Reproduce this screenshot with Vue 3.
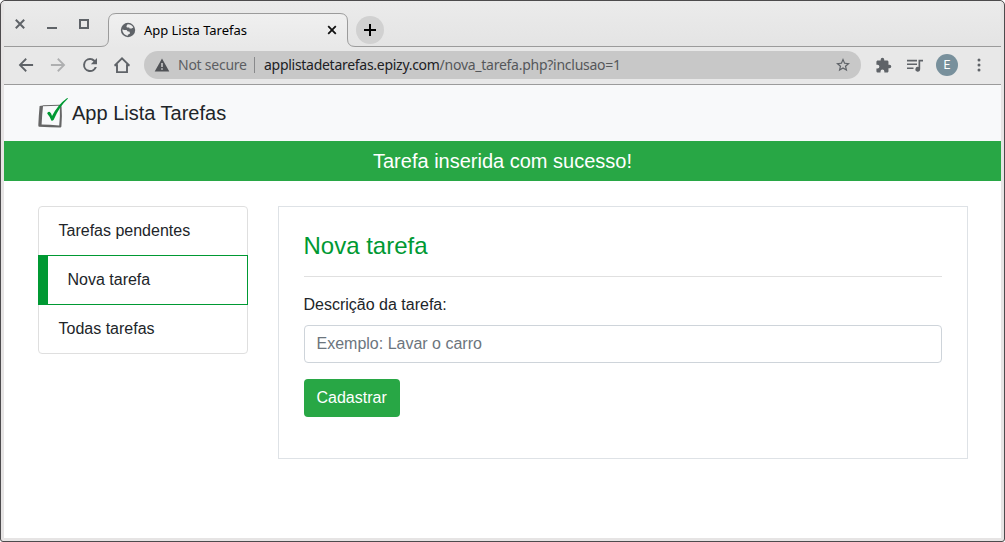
<script setup>
import { ref } from 'vue'

const items = ['Tarefas pendentes', 'Nova tarefa', 'Todas tarefas']
const active = ref(1)
const descricao = ref('')
</script>

<template>
  <div class="window">
    <header class="tabstrip">
      <svg class="outline" width="997" height="46" viewBox="4 1 997 46">
        <defs>
          <linearGradient id="tabfill" x1="0" y1="0" x2="0" y2="1">
            <stop offset="0" stop-color="#f0f0f0" />
            <stop offset="1" stop-color="#e8e8e8" />
          </linearGradient>
        </defs>
        <path d="M4 46.500H101Q108.500 46.500 108.500 39V21Q108.500 13.500 116 13.500H340Q347.500 13.500 347.500 21V39Q347.500 46.500 355 46.500H1001V48H4z" fill="url(#tabfill)" />
        <path d="M4 46.500H101Q108.500 46.500 108.500 39V21Q108.500 13.500 116 13.500H340Q347.500 13.500 347.500 21V39Q347.500 46.500 355 46.500H1001" fill="none" stroke="#9b9b9b" />
      </svg>
      <div class="controls">
        <svg width="12" height="12" viewBox="0 0 12 12"><path d="M1.800 1.800L10.200 10.200M10.200 1.800L1.800 10.200" stroke="#5f6368" stroke-width="2" /></svg>
        <svg width="12" height="12" viewBox="0 0 12 12"><path d="M1 9h10v2H1z" fill="#5f6368" /></svg>
        <svg width="12" height="12" viewBox="0 0 12 12"><path d="M2 2h8v8H2z" fill="none" stroke="#5f6368" stroke-width="2" /></svg>
      </div>
      <div class="tab">
        <svg width="16" height="16" viewBox="0 0 16 16">
          <circle cx="8" cy="8" r="7.200" fill="#5f6368" />
          <path d="M7.800 2.300C6.500 3.500 6 4.500 7 5.400L9.200 5.500 9.600 6.400 11.600 6.500 13.300 5.500C12.500 3.700 10.500 2.200 7.800 2.300z M2.300 7.600C2.500 10.700 4.800 13.500 7.900 13.700L7.800 12.800 9.900 11.700 9.700 9.700 7.500 9.200 6.600 8 4.500 7.900z" fill="#ececec" />
        </svg>
        <span class="tab-title">App Lista Tarefas</span>
        <svg class="tab-close" width="10" height="10" viewBox="0 0 10 10"><path d="M1.200 1.200L8.800 8.800M8.800 1.200L1.200 8.800" stroke="#111" stroke-width="1.800" /></svg>
      </div>
      <button class="new-tab">
        <svg width="12" height="12" viewBox="0 0 12 12"><path d="M6 0v12M0 6h12" stroke="#000" stroke-width="2" /></svg>
      </button>
    </header>

    <div class="toolbar">
      <div class="nav-icons">
        <svg width="20" height="20" viewBox="0 0 24 24"><path fill="#5f6368" d="M20.500 10.700H7.500l5.500-5.400L11.500 3.700 3.200 12l8.300 8.300 1.500-1.600L7.500 13.300h13z" /></svg>
        <svg width="20" height="20" viewBox="0 0 24 24"><path fill="#aeafb0" d="M3.500 10.700h13L11 5.300l1.500-1.600 8.300 8.300-8.300 8.300-1.500-1.600 5.500-5.400h-13z" /></svg>
        <svg width="20" height="20" viewBox="0 0 24 24"><path fill="#5f6368" d="M18 6A8.400 8.400 0 0 0 12 3.600a8.400 8.400 0 1 0 8.200 10.700h-2.600A6 6 0 1 1 12 6c1.700 0 3.200.7 4.200 1.800L13 11h7.400V3.600z" /></svg>
        <svg width="20" height="20" viewBox="0 0 20 20"><path fill="none" stroke="#5f6368" stroke-width="1.900" d="M2.600 10.700L10 3.300l7.400 7.400M2.500 10.200H5V17.100H15V10.200h2.500" /></svg>
      </div>
      <div class="address">
        <svg width="16" height="14" viewBox="0 0 16 14"><path fill="#505256" fill-rule="evenodd" d="M8 .5L15.300 13.500H.7zM7.200 5v4h1.600V5zM7.200 10.200v1.600h1.600v-1.600z" /></svg>
        <span class="secure">Not secure</span>
        <span class="divider"></span>
        <span class="url"><span class="host">applistadetarefas.epizy.com</span><span class="path">/nova_tarefa.php?inclusao=1</span></span>
        <svg class="star" width="16" height="16" viewBox="0 0 24 24"><path fill="#5f6368" d="M22.500 9.200l-7.500-.7L12 1.500 9 8.500l-7.500.7 5.700 4.900L5.500 21.500 12 17.600l6.500 3.900-1.700-7.400zM12 15.400l-3.800 2.300 1-4.300-3.300-2.900 4.400-.4L12 6.100l1.700 4 4.400.4-3.300 2.900 1 4.300z" /></svg>
      </div>
      <svg class="puzzle" width="17" height="17" viewBox="0 0 24 24"><path fill="#5f6368" d="M20.500 11H19V7c0-1.100-.9-2-2-2h-4V3.500a2.500 2.500 0 0 0-5 0V5H4c-1.100 0-2 .9-2 2v3.800h1.500a2.700 2.700 0 0 1 0 5.400H2V20c0 1.100.9 2 2 2h3.800v-1.500a2.700 2.700 0 0 1 5.400 0V22H17c1.100 0 2-.9 2-2v-4h1.500a2.500 2.500 0 0 0 0-5z" /></svg>
      <svg class="queue" width="16" height="13" viewBox="0 0 16 13"><path fill="#5f6368" d="M0 .8h10v1.600H0zM0 4.500h10v1.600H0zM0 8.500h6.500v1.600H0zM11.500.8H16v1.700h-2.800v7.800a2.400 2.400 0 1 1-1.700-2.300z" /></svg>
      <span class="avatar">E</span>
      <svg class="dots" width="4" height="14" viewBox="0 0 4 14"><g fill="#5f6368"><circle cx="2" cy="2" r="1.500" /><circle cx="2" cy="7" r="1.500" /><circle cx="2" cy="12" r="1.500" /></g></svg>
    </div>

    <div class="page">
      <nav class="navbar">
        <svg width="30" height="30" viewBox="0 0 30 30">
          <path fill="#666" fill-rule="evenodd" d="M1.600 8L5 7.600V7.200L21.500 6.800Q23.500 6.800 23.600 9L23.900 18 23.400 28.500Q23.300 29.600 22 29.500L12 29.200 1 28.700Q.2 28.600.3 27L.8 18zM5 8.200L4.200 17 3.600 26.400 12 26.800 21.200 27.400 21.900 18 21.800 8.900Q21.700 7.700 20.500 7.700z" />
          <path fill="#009933" d="M9.200 15.500Q9.600 13.400 11.800 13.900Q13.300 14.900 14 18Q20 6.500 29.200 0Q29.900 0 30 .6Q21.500 8.500 15.700 21.700Q14.600 23.200 13.300 22.600Q12.100 18.800 9.200 15.500z" />
        </svg>
        <span>App Lista Tarefas</span>
      </nav>
      <div class="alert">Tarefa inserida com sucesso!</div>
      <main class="content">
        <ul class="menu">
          <li v-for="(item, i) in items" :key="item" :class="{ active: i === active }" @click="active = i">{{ item }}</li>
        </ul>
        <section class="panel">
          <h4>Nova tarefa</h4>
          <hr />
          <form @submit.prevent>
            <label for="descricao">Descrição da tarefa:</label>
            <input id="descricao" v-model="descricao" type="text" placeholder="Exemplo: Lavar o carro" />
            <button class="submit">Cadastrar</button>
          </form>
        </section>
      </main>
    </div>
  </div>
</template>

<style>
body { background: #fff; }
</style>

<style scoped>
* { box-sizing: border-box; }
svg { display: block; flex: none; }
.window {
  width: 1005px;
  height: 542px;
  border: 1px solid #4d4b4d;
  border-radius: 5px 5px 3px 3px;
  padding: 0 3px 3px;
  background: #e6e4e4;
  overflow: hidden;
  display: flex;
  flex-direction: column;
  font-family: "Liberation Sans", Arial, sans-serif;
  color: #212529;
}
.tabstrip {
  position: relative;
  height: 46px;
  flex: none;
  display: flex;
  background: linear-gradient(#ebebeb, #e4e4e4);
}
.outline { position: absolute; left: 0; top: 0; }
.controls, .tab, .new-tab { position: relative; }
.controls { display: flex; gap: 20px; padding: 17px 0 0 10px; width: 104px; }
.tab {
  display: flex;
  align-items: center;
  width: 240px;
  height: 33px;
  margin-top: 12px;
  padding: 0 11px 0 12px;
}
.tab-title {
  margin-left: 8px;
  font: 13px "Noto Sans", sans-serif;
  letter-spacing: -0.03px;
  color: #000;
  white-space: nowrap;
}
.tab-close { margin-left: auto; }
.new-tab {
  display: grid;
  place-items: center;
  width: 28px;
  height: 28px;
  margin: 15px 0 0 8px;
  padding: 0;
  border: 0;
  border-radius: 50%;
  background: #d1d1d1;
}
.toolbar {
  flex: none;
  height: 38px;
  display: flex;
  align-items: center;
  padding-bottom: 1px;
  background: #e8e8e8;
  border-bottom: 1px solid #9b9b9b;
}
.nav-icons { display: flex; gap: 12px; padding-left: 12px; width: 140px; flex: none; }
.address {
  width: 717px;
  height: 28px;
  flex: none;
  display: flex;
  align-items: center;
  padding: 0 10px;
  border-radius: 14px;
  background: #c8c8c8;
  font: 14px "Noto Sans", sans-serif;
  white-space: nowrap;
}
.address .secure, .address .url { padding-bottom: 1px; }
.secure { width: 76px; margin-left: 8px; color: #5c5e62; letter-spacing: -0.25px; }
.divider { width: 1px; height: 16px; background: #88898b; }
.url { margin-left: 9px; color: #202124; }
.host { letter-spacing: -0.28px; }
.path { color: #55575a; letter-spacing: -0.26px; }
.star { margin-left: auto; }
.puzzle { margin-left: 14px; }
.queue { margin-left: 15px; }
.avatar {
  width: 22px;
  height: 22px;
  margin-left: 13px;
  border-radius: 50%;
  background: #78909c;
  color: #fff;
  font: 12px/22px Roboto, sans-serif;
  text-align: center;
}
.dots { margin-left: 19px; }
.page { flex: 1; background: #fff; }
.navbar {
  height: 56px;
  display: flex;
  align-items: center;
  gap: 4px;
  padding-left: 34px;
  background: #f8f9fa;
  font-size: 20px;
}
.alert {
  height: 40px;
  line-height: 40px;
  background: #28a745;
  color: #fff;
  font-size: 20px;
  text-align: center;
}
.content { display: flex; align-items: flex-start; gap: 30px; padding: 25px 33px 0 33.5px; }
.menu { width: 210px; margin: 0; padding: 0; list-style: none; line-height: 24px; }
.menu li { height: 50px; padding: 12px 20px; border: 1px solid #dfdfdf; }
.menu li + li { margin-top: -1px; }
.menu li:first-child { border-radius: 4px 4px 0 0; }
.menu li:last-child { border-radius: 0 0 4px 4px; }
.menu li.active { position: relative; border-color: #009933; border-left-width: 10px; }
.panel { flex: 1; height: 253px; padding: 24px 25px; border: 1px solid #dee2e6; }
h4 { margin: 0; color: #009933; font-size: 24px; font-weight: 500; line-height: 29px; }
.panel hr { margin: 16px 0; border: 0; border-top: 1px solid #e0e0e0; }
form { display: flex; flex-direction: column; align-items: flex-start; }
label { line-height: 24px; margin-bottom: 8px; }
input {
  width: 100%;
  height: 38px;
  padding: 6px 12px;
  border: 1px solid #ced4da;
  border-radius: 4px;
  font: inherit;
}
input::placeholder { color: #6c757d; opacity: 1; }
.submit {
  height: 38px;
  margin-top: 16px;
  padding: 6px 13px;
  border: 0;
  border-radius: 4px;
  background: #28a745;
  color: #fff;
  font: inherit;
}
</style>
